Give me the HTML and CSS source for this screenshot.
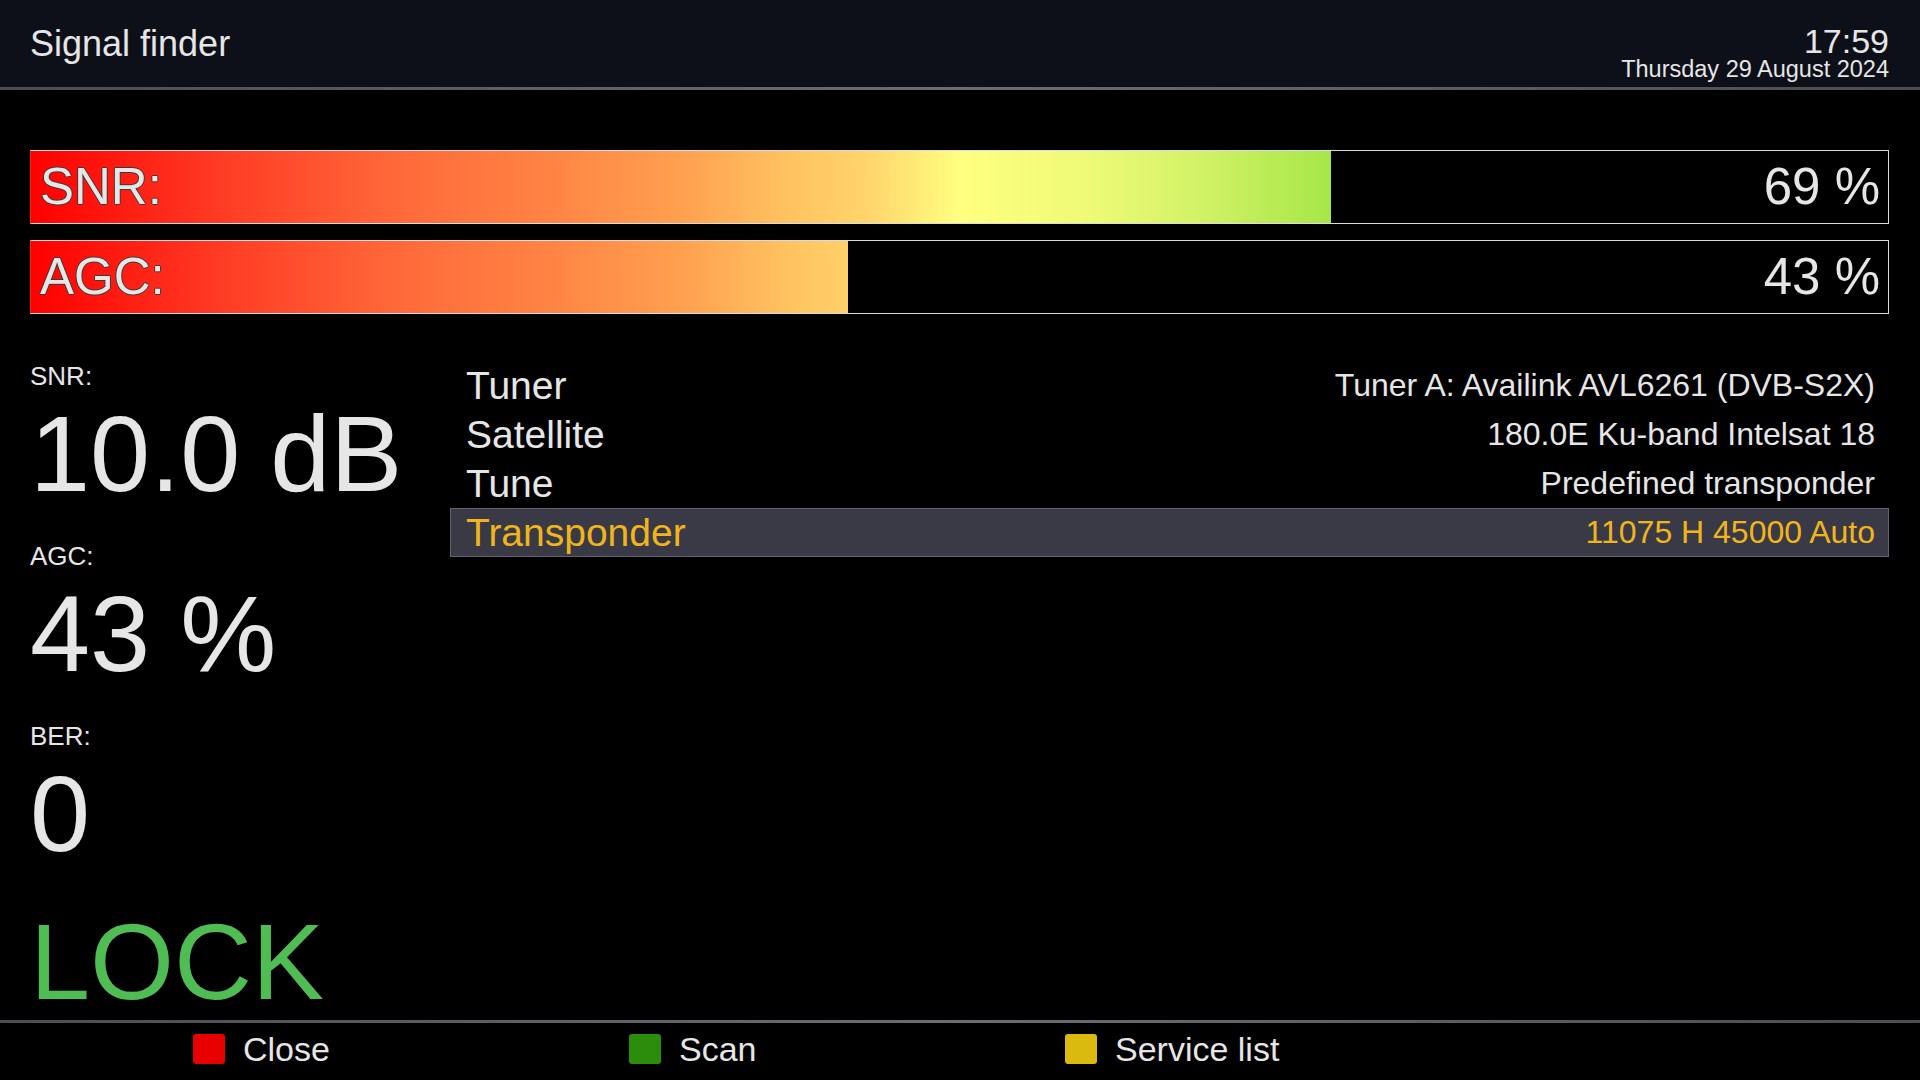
FILE: index.html
```html
<!DOCTYPE html>
<html lang="en">

<head>
    <meta charset="UTF-8">
    <meta name="viewport" content="width=device-width, initial-scale=1.0">
    <title>Signal finder</title>
    <link rel="stylesheet" href="styles.css">
</head>
<body>
    <div class="screen">
        <header>
            <div class="title">Signal finder</div>
            <div class="clock">
                <div class="time">17:59</div>
                <div class="date">Thursday 29 August 2024</div>
            </div>
        </header>
        <div class="rule"></div>

        <div class="main">
            <div class="bar">
                <div class="bar-fill" style="width: 70%">SNR:</div>
                <div class="bar-rest">69 %</div>
            </div>
            <div class="bar">
                <div class="bar-fill" style="width: 44%">AGC:</div>
                <div class="bar-rest">43 %</div>
            </div>

            <div class="content">
                <div class="stats">
                    <div class="stat">
                        <div class="stat-label">SNR:</div>
                        <div class="stat-value">10.0 dB</div>
                    </div>
                    <div class="stat">
                        <div class="stat-label">AGC:</div>
                        <div class="stat-value">43 %</div>
                    </div>
                    <div class="stat">
                        <div class="stat-label">BER:</div>
                        <div class="stat-value">0</div>
                    </div>
                    <div class="lock">LOCK</div>
                </div>

                <div class="config-list">
                    <div class="config-row">
                        <span class="config-name">Tuner</span>
                        <span class="config-value">Tuner A: Availink AVL6261 (DVB-S2X)</span>
                    </div>
                    <div class="config-row">
                        <span class="config-name">Satellite</span>
                        <span class="config-value">180.0E Ku-band Intelsat 18</span>
                    </div>
                    <div class="config-row">
                        <span class="config-name">Tune</span>
                        <span class="config-value">Predefined transponder</span>
                    </div>
                    <div class="config-row selected">
                        <span class="config-name">Transponder</span>
                        <span class="config-value">11075 H 45000 Auto</span>
                    </div>
                </div>
            </div>
        </div>

        <footer>
            <div class="rule"></div>
            <div class="buttons">
                <div class="button"><span class="key red"></span>Close</div>
                <div class="button"><span class="key green"></span>Scan</div>
                <div class="button"><span class="key yellow"></span>Service list</div>
            </div>
        </footer>
    </div>
</body>
</html>
```

FILE: styles.css
```css
body {
    margin: 0;
    padding: 0;
    background-color: #000;
    color: #e6e6e6;
    font-family: "Liberation Sans", Arial, sans-serif;
}

.screen {
    width: 1920px;
    height: 1080px;
    display: flex;
    flex-direction: column;
    overflow: hidden;
}

header {
    height: 87px;
    box-sizing: border-box;
    padding: 25px 31px 0 30px;
    background-color: #0d1019;
    display: flex;
    justify-content: space-between;
    align-items: flex-start;
}

.title {
    font-size: 36px;
    line-height: 36px;
    margin-top: 1px;
}

.clock {
    text-align: right;
    margin-top: -1px;
}

.time {
    font-size: 34px;
    line-height: 34px;
}

.date {
    font-size: 23.5px;
    line-height: 23px;
}

.rule {
    height: 3px;
    background: linear-gradient(90deg, #4c4d52, #6c6d72 50%, #4c4d52);
}

.main {
    flex: 1;
    padding: 60px 31px 0 30px;
}

.bar {
    display: flex;
    height: 74px;
    box-sizing: border-box;
    border: 1px solid #dcdcdc;
    border-left-color: #ff2010;
    background: linear-gradient(90deg, #ff0000 0%, #ff3a24 10%, #ff6a3a 20%, #ff8444 28%, #ffa050 35%, #ffc462 41%, #ffd46c 45%, #ffff80 50%, #eefa76 57%, #d2f266 63%, #a6e648 70%, #6cd42c 85%, #3cc41c 100%);
    font-size: 51px;
    line-height: 72px;
}

.bar + .bar {
    margin-top: 16px;
}

.bar-fill {
    box-sizing: border-box;
    padding-left: 9px;
    white-space: nowrap;
    text-shadow: -1px 0 #3a3a3a, 1px 0 #3a3a3a, 0 -1px #3a3a3a, 0 1px #3a3a3a;
}

.bar-rest {
    flex: 1;
    background-color: #000;
    text-align: right;
    padding-right: 8px;
}

.content {
    display: flex;
    margin-top: 47px;
}

.stats {
    width: 420px;
}

.stat {
    margin-bottom: 25px;
}

.stat-label {
    font-size: 26px;
    line-height: 30px;
}

.stat-value {
    font-size: 108px;
    line-height: 125px;
}

.lock {
    color: #4fbd54;
    font-size: 108px;
    line-height: 110px;
    margin-top: 31px;
}

.config-list {
    flex: 1;
}

.config-row {
    display: flex;
    justify-content: space-between;
    height: 49px;
    box-sizing: border-box;
    padding: 0 14px 0 16px;
    line-height: 49px;
}

.config-name {
    font-size: 39px;
}

.config-value {
    font-size: 32px;
}

.config-row.selected {
    background-color: #393a46;
    border: 1px solid #62646c;
    line-height: 47px;
    padding: 0 13px 0 15px;
    color: #f0b51c;
}

footer {
    height: 60px;
}

.buttons {
    display: flex;
    height: 50px;
    align-items: center;
    padding-left: 193px;
    padding-top: 1px;
}

.button {
    width: 436px;
    display: flex;
    align-items: center;
    font-size: 34px;
    line-height: 34px;
}

.key {
    width: 32px;
    height: 30px;
    border-radius: 3px;
    margin-right: 18px;
    box-shadow: 0 2px 3px rgba(0, 0, 0, 0.8);
}

.key.red {
    background-color: #e80000;
}

.key.green {
    background-color: #2c8c0c;
}

.key.yellow {
    background-color: #dbba10;
}
```
